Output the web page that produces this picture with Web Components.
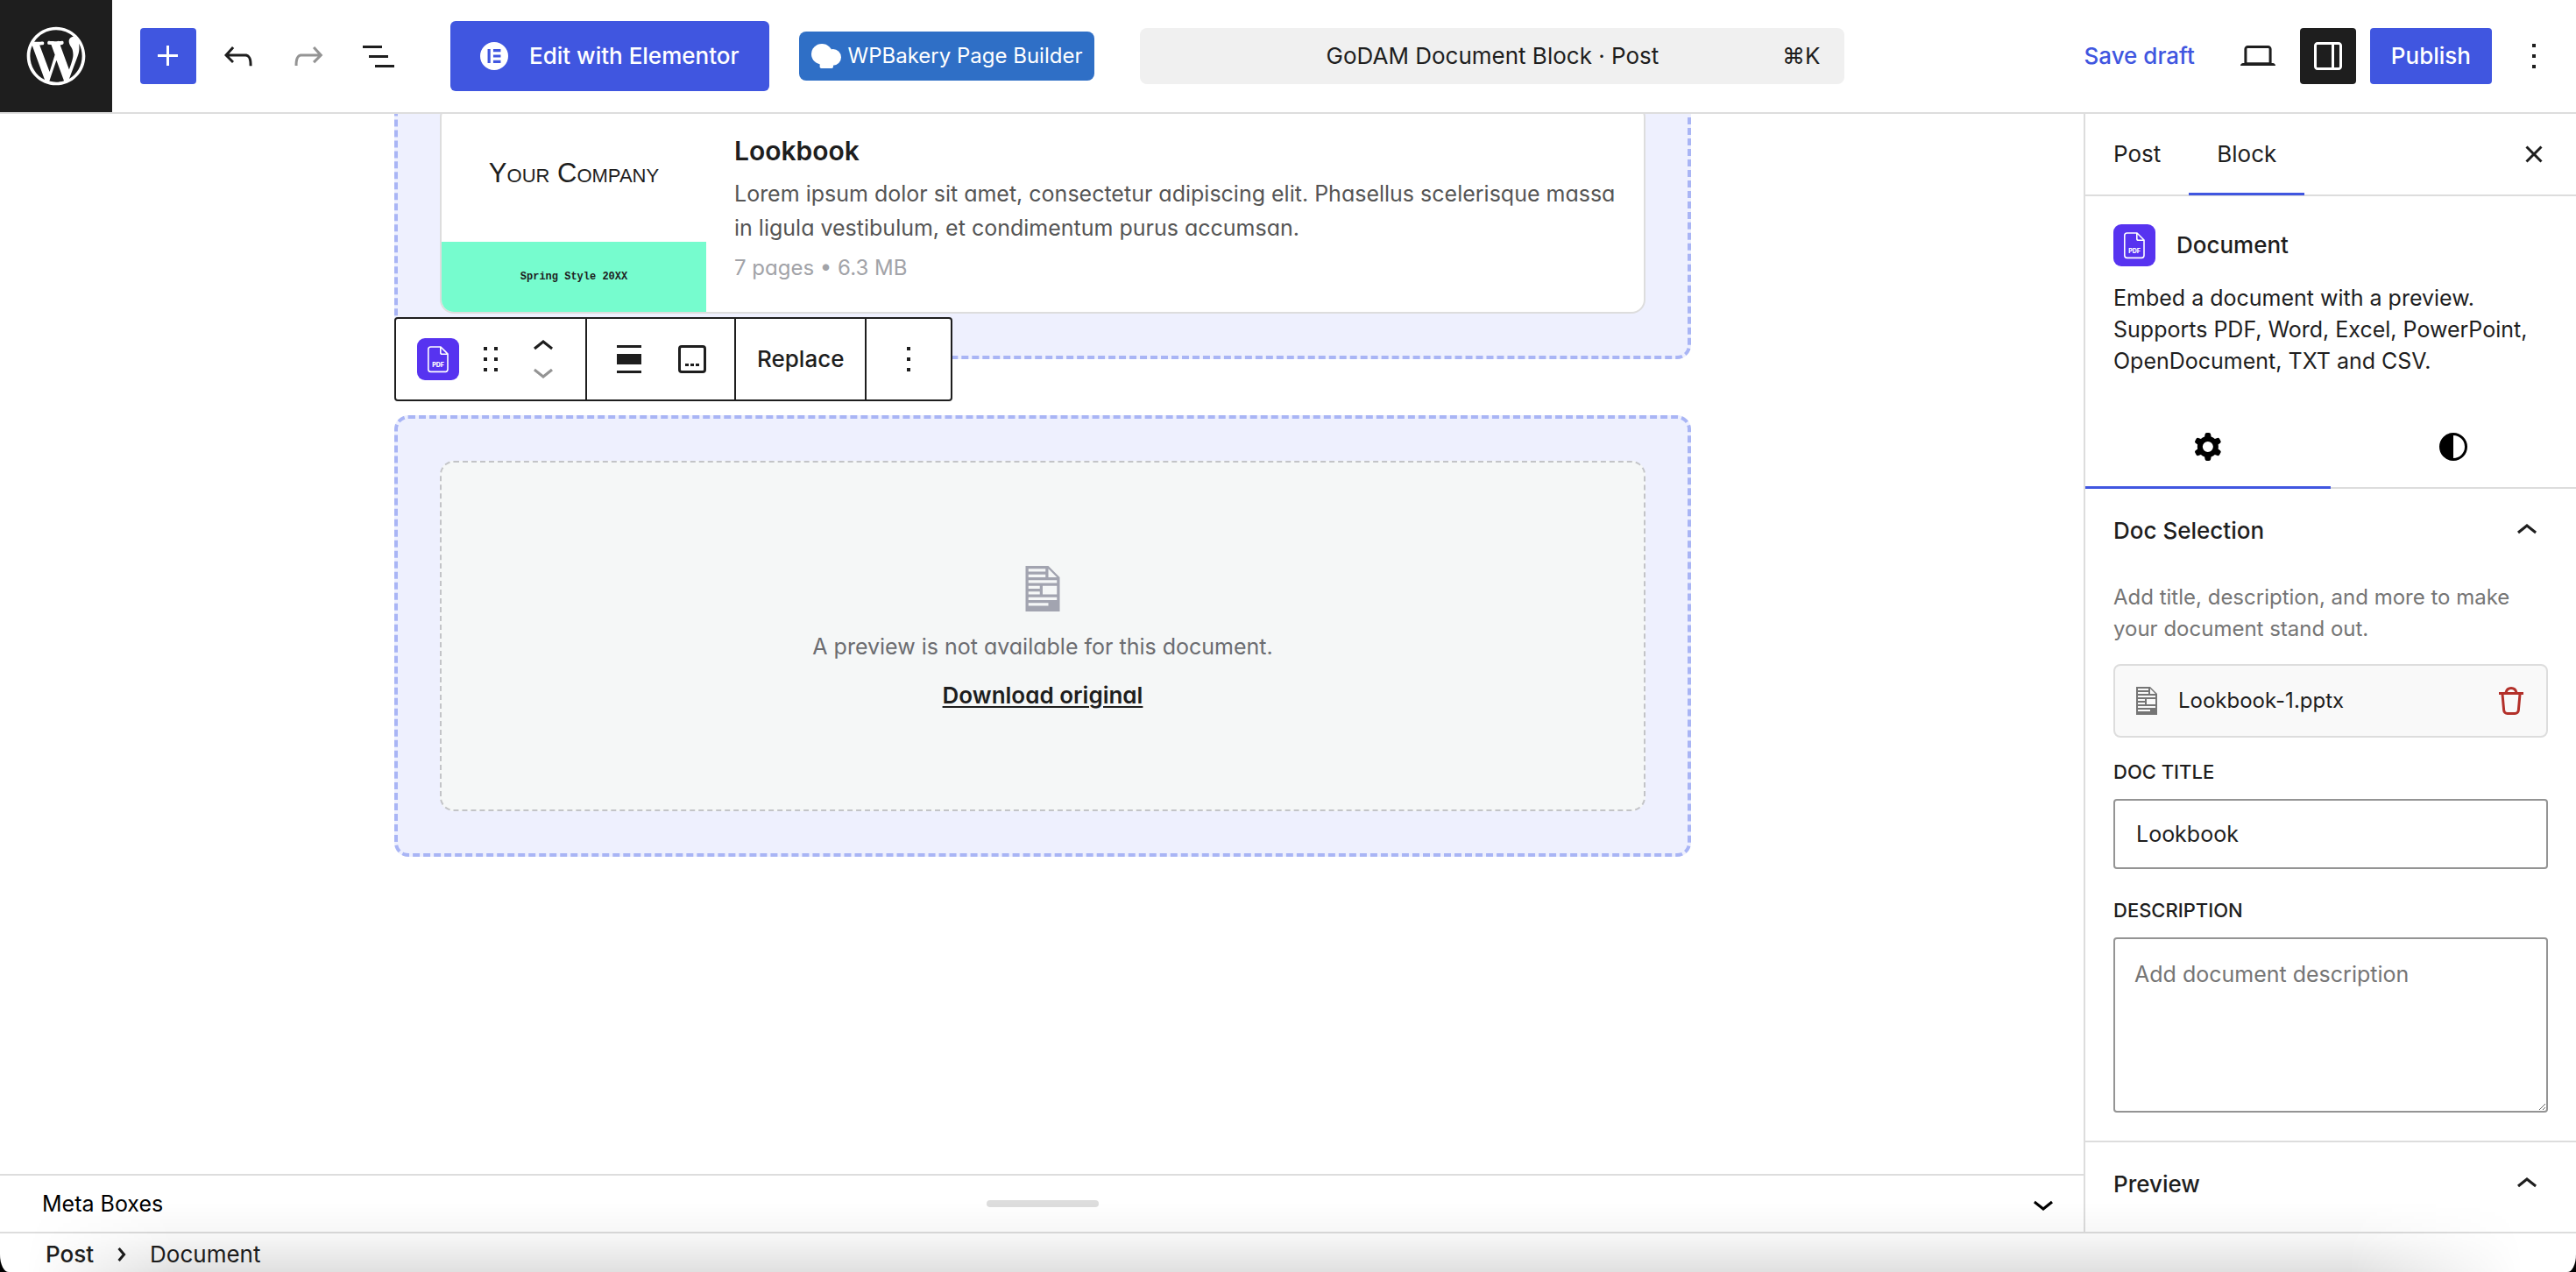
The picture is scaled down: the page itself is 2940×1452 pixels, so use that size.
<!DOCTYPE html>
<html lang="en">
<head>
<meta charset="utf-8">
<title>GoDAM Document Block</title>
<style>
  html {
    background: #000;
  }

  body {
    --accent: #4056e0;
    --ink: #1e1e1e;
    --line: #ddd;
    --muted: #757575;
    margin: 0;
    color: var(--ink);
    font: 400 25px/36px Inter, "Liberation Sans", sans-serif;
  }
</style>
</head>
<body>
<editor-app>
  <editor-header slot="header" heading="GoDAM Document Block · Post"></editor-header>

  <editor-canvas slot="canvas">
    <block-frame>
      <document-card heading="Lookbook" meta="7 pages • 6.3 MB">
        <slide-cover slot="cover" company="Your Company" caption="Spring Style 20XX"></slide-cover>
        Lorem ipsum dolor sit amet, consectetur adipiscing elit. Phasellus scelerisque massa in ligula vestibulum, et condimentum purus accumsan.
      </document-card>
    </block-frame>
    <block-frame>
      <block-toolbar slot="toolbar"></block-toolbar>
      <document-placeholder>A preview is not available for this document.</document-placeholder>
    </block-frame>
  </editor-canvas>

  <meta-boxes slot="meta">Meta Boxes</meta-boxes>

  <editor-sidebar slot="sidebar">
    <side-panel heading="Doc Selection">
      <file-row name="Lookbook-1.pptx">Add title, description, and more to make your document stand out.</file-row>
      <side-field label="Doc title" value="Lookbook"></side-field>
      <side-field label="Description" placeholder="Add document description" multiline></side-field>
    </side-panel>
    <side-panel heading="Preview"></side-panel>
  </editor-sidebar>

  <block-breadcrumb slot="footer"></block-breadcrumb>
</editor-app>

<script>
const ICONS = {
  plus: '<path d="M11 12.5V17.5H12.5V12.5H17.5V11H12.5V6H11V11H6V12.5H11Z"/>',
  undo: '<path d="M18.3 11.7c-.6-.6-1.4-.9-2.3-.9H6.7l2.9-3.3-1.1-1-4.5 5L8.5 16l1-1-2.7-2.7H16c.5 0 .9.2 1.3.5 1 1 1 3.4 1 4.5v.3h1.5v-.2c0-1.5 0-4.3-1.5-5.7z"/>',
  redo: '<path d="M15.6 6.5l-1.1 1 2.9 3.3H8c-.9 0-1.7.3-2.3.9-1.4 1.5-1.4 4.2-1.4 5.6v.2h1.5v-.3c0-1.1 0-3.5 1-4.5.3-.3.7-.5 1.3-.5h9.2L14.5 15l1.1 1.1 4.6-4.6-4.6-5z"/>',
  list: '<path d="M3 6h11v1.5H3V6Zm3.5 5.5h11V13h-11v-1.5ZM21 17H10v1.5h11V17Z"/>',
  desktop: '<path d="M20.5 16h-.7V8c0-1.1-.9-2-2-2H6.2c-1.1 0-2 .9-2 2v8h-.7c-.8 0-1.5.7-1.5 1.5h20c0-.8-.7-1.5-1.5-1.5zM5.7 8c0-.3.2-.5.5-.5h11.6c.3 0 .5.2.5.5v7.6H5.7V8z"/>',
  drawer: '<path d="M18 4H6c-1.1 0-2 .9-2 2v12c0 1.1.9 2 2 2h12c1.1 0 2-.9 2-2V6c0-1.1-.9-2-2-2zm-4 14.5H6c-.3 0-.5-.2-.5-.5V6c0-.3.2-.5.5-.5h8v13zm4.5-.5c0 .3-.2.5-.5.5h-2.5v-13H18c.3 0 .5.2.5.5v12z"/>',
  more: '<path d="M13 19h-2v-2h2v2zm0-6h-2v-2h2v2zm0-6h-2V5h2v2z"/>',
  close: '<path d="M12 13.06l3.712 3.713 1.061-1.06L13.061 12l3.712-3.712-1.06-1.06L12 10.938 8.288 7.227l-1.061 1.06L10.939 12l-3.712 3.712 1.06 1.061L12 13.061z"/>',
  up: '<path d="M6.5 12.4L12 8l5.5 4.4-.9 1.2L12 10l-4.5 3.6-1-1.2z"/>',
  down: '<path d="M17.5 11.6L12 16l-5.5-4.4.9-1.2L12 14l4.5-3.6 1 1.2z"/>',
  right: '<path d="M10.862 8.04l3.419 3.989-3.419 3.988-1.139-.976 2.582-3.012-2.582-3.012 1.139-.977z"/>',
  drag: '<path d="M8 7h2V5H8v2zm0 6h2v-2H8v2zm0 6h2v-2H8v2zm6-14v2h2V5h-2zm0 8h2v-2h-2v2zm0 6h2v-2h-2v2z"/>',
  align: '<path d="M19 5.5H5V4h14v1.5ZM19 20H5v-1.5h14V20ZM5 9h14v6H5V9Z"/>',
  caption: '<path fill-rule="evenodd" d="M6 5.5h12a.5.5 0 0 1 .5.5v12a.5.5 0 0 1-.5.5H6a.5.5 0 0 1-.5-.5V6a.5.5 0 0 1 .5-.5ZM4 6a2 2 0 0 1 2-2h12a2 2 0 0 1 2 2v12a2 2 0 0 1-2 2H6a2 2 0 0 1-2-2V6Zm4 10h2v-1.5H8V16Zm5 0h-2v-1.5h2V16Zm1 0h2v-1.5h-2V16Z"/>',
  cog: '<path fill-rule="evenodd" d="M10.289 4.836A1 1 0 0111.275 4h1.306a1 1 0 01.987.836l.244 1.466c.787.26 1.503.679 2.108 1.218l1.393-.522a1 1 0 011.216.437l.653 1.13a1 1 0 01-.23 1.273l-1.148.944a6.025 6.025 0 010 2.435l1.149.946a1 1 0 01.23 1.272l-.653 1.13a1 1 0 01-1.216.437l-1.394-.522c-.605.54-1.32.958-2.108 1.218l-.244 1.466a1 1 0 01-.987.836h-1.306a1 1 0 01-.986-.836l-.244-1.466a5.995 5.995 0 01-2.108-1.218l-1.394.522a1 1 0 01-1.217-.436l-.653-1.131a1 1 0 01.23-1.272l1.149-.946a6.026 6.026 0 010-2.435l-1.148-.944a1 1 0 01-.23-1.272l.653-1.131a1 1 0 011.217-.437l1.393.522a5.994 5.994 0 012.108-1.218l.244-1.466zM14.929 12a3 3 0 11-6 0 3 3 0 016 0z"/>',
  styles: '<path fill-rule="evenodd" d="M20 12a8 8 0 1 1-16 0 8 8 0 0 1 16 0Zm-1.5 0a6.5 6.5 0 0 1-6.5 6.5v-13a6.5 6.5 0 0 1 6.5 6.5Z"/>',
  trash: '<path fill-rule="evenodd" d="M12 5.5A2.25 2.25 0 0 0 9.878 7h4.244A2.251 2.251 0 0 0 12 5.5ZM12 4a3.751 3.751 0 0 0-3.675 3H5v1.5h1.27l.818 8.997a2.75 2.75 0 0 0 2.739 2.501h4.347a2.75 2.75 0 0 0 2.738-2.5L17.73 8.5H19V7h-3.325A3.751 3.751 0 0 0 12 4Zm4.224 4.5H7.776l.806 8.861a1.25 1.25 0 0 0 1.245 1.137h4.347a1.25 1.25 0 0 0 1.245-1.137l.805-8.861Z"/>',
  file: '<path transform="translate(2 2)" d="M12 2l4 4v12H4V2h8zM5 3v1h6V3H5zm7 3h3l-3-3v3zM5 5v1h6V5H5zm10 3V7H5v1h10zM5 9v1h4V9H5zm10 3V9h-5v3h5zM5 11v1h4v-1H5zm10 3v-1H5v1h10zM5 15v1h7v-1H5z"/>',
  wordpress: '<path transform="translate(2 2)" d="M20 10c0-5.51-4.49-10-10-10C4.48 0 0 4.49 0 10c0 5.52 4.48 10 10 10 5.51 0 10-4.48 10-10zM7.78 15.37L4.37 6.22c.55-.02 1.17-.08 1.17-.08.5-.06.44-1.13-.06-1.11 0 0-1.45.11-2.37.11-.18 0-.37 0-.58-.01C4.12 2.69 6.87 1.11 10 1.11c2.33 0 4.45.87 6.05 2.34-.68-.11-1.65.39-1.65 1.58 0 .74.45 1.36.9 2.1.35.61.55 1.36.55 2.46 0 1.49-1.4 5-1.4 5l-3.03-8.37c.54-.02.82-.17.82-.17.5-.05.44-1.25-.06-1.22 0 0-1.44.12-2.38.12-.87 0-2.33-.12-2.33-.12-.5-.03-.56 1.2-.06 1.22l.92.08 1.26 3.41zM17.41 10c.24-.64.74-1.87.43-4.25.7 1.29 1.05 2.71 1.05 4.25 0 3.29-1.73 6.24-4.4 7.78.97-2.59 1.94-5.2 2.92-7.78zM6.1 18.09C3.12 16.65 1.11 13.53 1.11 10c0-1.3.23-2.48.72-3.59C3.25 10.3 4.67 14.2 6.1 18.09zm4.03-6.63l2.58 6.98c-.86.29-1.76.45-2.71.45-.79 0-1.57-.11-2.29-.33.81-2.38 1.62-4.74 2.42-7.1z"/>',
  elementor: '<path fill-rule="evenodd" d="M12 0a12 12 0 1 1 0 24A12 12 0 0 1 12 0ZM6.4 6v12h2.4V6H6.4Zm4.8 0v2.4h6.4V6h-6.4Zm0 4.8v2.4h6.4v-2.4h-6.4Zm0 4.8V18h6.4v-2.4h-6.4Z"/>',
  bakery: '<ellipse cx="8.5" cy="10.4" rx="8.5" ry="8.3"/><circle cx="17.4" cy="13" r="6.6"/><rect x="6.8" y="14" width="10.8" height="7.9" rx="1.2"/>',
  pdf: '<rect width="24" height="24" rx="4.5" fill="#5733f0"/><path d="M7.8 5h5.7l4 4v8.8a1.4 1.4 0 0 1-1.4 1.4H7.8a1.4 1.4 0 0 1-1.4-1.4V6.4A1.4 1.4 0 0 1 7.8 5Zm5.6 0v3.2c0 .6.3.9.9.9h3.2" fill="none" stroke="#fff" stroke-width=".8" stroke-linejoin="round"/><text x="12" y="16.7" fill="#fff" font-size="3.5" font-weight="800" text-anchor="middle">PDF</text>'
};

// Shared button reset, included by the elements that hold controls.
const CONTROLS = `
  button {
    display: flex;
    align-items: center;
    justify-content: center;
    box-sizing: border-box;
    margin: 0;
    padding: 0;
    border: 0;
    border-radius: 4px;
    background: none;
    color: inherit;
    font: inherit;
    cursor: pointer;
  }
  .icon { width: 64px; height: 64px; flex: none; }
`;

class BaseElement extends HTMLElement {
  constructor() {
    super();
    this.attachShadow({ mode: 'open' });
  }

  connectedCallback() {
    this.shadowRoot.innerHTML = this.render();
  }

  attr(name) {
    return this.getAttribute(name) || '';
  }
}

class UiIcon extends BaseElement {
  render() {
    return `
      <style>
        :host { display: block; flex: none; width: 48px; height: 48px; }
        svg { display: block; width: 100%; height: 100%; fill: currentColor; }
      </style>
      <svg viewBox="0 0 24 24" aria-hidden="true">${ICONS[this.attr('name')]}</svg>
    `;
  }
}

class EditorApp extends BaseElement {
  render() {
    return `
      <style>
        :host {
          display: flex;
          flex-direction: column;
          height: 100vh;
          overflow: hidden;
          position: relative;
          background: #fff;
          border-radius: 0 0 10px 10px / 0 0 20px 20px;
        }
        #body { flex: 1; display: flex; min-height: 0; }
        #main { flex: 1; display: flex; flex-direction: column; min-width: 0; }
        /* soft shade along the window's bottom edge */
        #shade {
          position: absolute;
          left: 0;
          right: 0;
          bottom: 0;
          height: 80px;
          pointer-events: none;
          background: linear-gradient(rgba(0,0,0,0), rgba(0,0,0,0.035) 50%, rgba(0,0,0,0.12));
          -webkit-mask-image: linear-gradient(90deg, transparent 30px, #000 200px, #000 calc(100% - 260px), transparent calc(100% - 60px));
          mask-image: linear-gradient(90deg, transparent 30px, #000 200px, #000 calc(100% - 260px), transparent calc(100% - 60px));
        }
      </style>
      <slot name="header"></slot>
      <div id="body">
        <div id="main">
          <slot name="canvas"></slot>
          <slot name="meta"></slot>
        </div>
        <slot name="sidebar"></slot>
      </div>
      <slot name="footer"></slot>
      <div id="shade"></div>
    `;
  }
}

class EditorHeader extends BaseElement {
  render() {
    return `
      <style>
        ${CONTROLS}
        :host {
          display: flex;
          align-items: center;
          height: 128px;
          flex: none;
          border-bottom: 2px solid var(--line);
          padding-right: 16px;
          font-size: 26px;
        }
        #home {
          display: flex;
          align-items: center;
          justify-content: center;
          width: 128px;
          height: 128px;
          flex: none;
          background: var(--ink);
          color: #fff;
        }
        #home ui-icon { width: 80px; height: 80px; }
        #tools { display: flex; gap: 16px; margin-left: 32px; }
        .primary { background: var(--accent); color: #fff; }
        .dark { background: var(--ink); color: #fff; }
        [aria-disabled] { color: #949494; }
        #elementor {
          height: 80px;
          margin-left: 50px;
          padding: 0 34px;
          gap: 24px;
          border-radius: 6px;
          font-weight: 500;
        }
        #elementor ui-icon { width: 32px; height: 32px; }
        #bakery {
          height: 56px;
          margin-left: 34px;
          padding: 0 14px;
          gap: 8px;
          border-radius: 8px;
          background: #2f6fc6;
          color: #fff;
          font-size: 24px;
        }
        #bakery ui-icon { width: 34px; height: 34px; }
        #command {
          display: grid;
          grid-template-columns: 1fr auto 1fr;
          flex: 0 1 804px;
          height: 64px;
          margin-left: 52px;
          padding: 0 28px;
          border-radius: 8px;
          background: #f0f0f0;
        }
        #command kbd { grid-column: 3; justify-self: end; font: inherit; }
        #command span { grid-column: 2; }
        #actions { display: flex; gap: 16px; margin-left: auto; font-weight: 500; }
        #actions .text { height: 64px; padding: 0 24px; }
        #save { color: var(--accent); }
      </style>
      <a id="home" href="#" aria-label="View posts"><ui-icon name="wordpress"></ui-icon></a>
      <div id="tools">
        <button class="icon primary" aria-label="Block inserter"><ui-icon name="plus"></ui-icon></button>
        <button class="icon" aria-label="Undo"><ui-icon name="undo"></ui-icon></button>
        <button class="icon" aria-label="Redo" aria-disabled="true"><ui-icon name="redo"></ui-icon></button>
        <button class="icon" aria-label="Document overview"><ui-icon name="list"></ui-icon></button>
      </div>
      <button id="elementor" class="primary"><ui-icon name="elementor"></ui-icon>Edit with Elementor</button>
      <button id="bakery"><ui-icon name="bakery"></ui-icon>WPBakery Page Builder</button>
      <button id="command"><span>${this.attr('heading')}</span><kbd>⌘K</kbd></button>
      <div id="actions">
        <button id="save" class="text">Save draft</button>
        <button class="icon" aria-label="View"><ui-icon name="desktop"></ui-icon></button>
        <button class="icon dark" aria-label="Settings"><ui-icon name="drawer"></ui-icon></button>
        <button class="text primary">Publish</button>
        <button class="icon" aria-label="Options"><ui-icon name="more"></ui-icon></button>
      </div>
    `;
  }
}

class EditorCanvas extends BaseElement {
  render() {
    return `
      <style>
        :host { display: block; flex: 1; min-height: 0; overflow: hidden; }
        /* scrolled down past the top of the first block */
        #content {
          display: flex;
          flex-direction: column;
          gap: 64px;
          max-width: 1480px;
          margin: -64px auto 0;
          font-feature-settings: "cv11";
        }
      </style>
      <div id="content"><slot></slot></div>
    `;
  }
}

class BlockFrame extends BaseElement {
  render() {
    return `
      <style>
        :host { display: block; position: relative; }
        #frame {
          padding: 48px;
          border: 4px dashed #a9b5f5;
          border-radius: 16px;
          background: #eef0fe;
        }
        ::slotted([slot="toolbar"]) {
          position: absolute;
          left: 0;
          bottom: calc(100% + 16px);
        }
      </style>
      <slot name="toolbar"></slot>
      <div id="frame"><slot></slot></div>
    `;
  }
}

class SlideCover extends BaseElement {
  render() {
    return `
      <style>
        :host { display: flex; flex-direction: column; width: 302px; height: 236px; flex: none; text-align: center; }
        #company {
          flex: 1;
          display: flex;
          align-items: center;
          justify-content: center;
          font: 400 31px/40px "Liberation Sans Narrow", "Liberation Sans", sans-serif;
          font-variant: small-caps;
        }
        #caption {
          background: #76fcce;
          font: 700 12px/80px "Liberation Mono", monospace;
        }
      </style>
      <div id="company">${this.attr('company')}</div>
      <div id="caption">${this.attr('caption')}</div>
    `;
  }
}

class DocumentCard extends BaseElement {
  render() {
    return `
      <style>
        :host {
          display: flex;
          align-items: center;
          overflow: hidden;
          gap: 32px;
          padding-right: 12px;
          border: 2px solid var(--line);
          border-radius: 16px;
          background: #fff;
        }
        #text { flex: 1; min-width: 0; }
        h2 { margin: 0 0 10px; font-size: 30px; line-height: 40px; font-weight: 600; }
        p { margin: 0; line-height: 39px; color: #555; }
        #meta { margin-top: 6px; font-size: 24px; color: #a2a3a8; }
      </style>
      <slot name="cover"></slot>
      <div id="text">
        <h2>${this.attr('heading')}</h2>
        <p><slot></slot></p>
        <p id="meta">${this.attr('meta')}</p>
      </div>
    `;
  }
}

class DocumentPlaceholder extends BaseElement {
  render() {
    return `
      <style>
        :host {
          display: flex;
          flex-direction: column;
          align-items: center;
          justify-content: center;
          box-sizing: border-box;
          height: 400px;
          padding-bottom: 6px;
          border: 2px dashed #c3c4c7;
          border-radius: 16px;
          background: #f5f7f7;
          color: #6b6c70;
          line-height: 39px;
        }
        ui-icon { width: 78px; height: 78px; margin-bottom: 8px; color: #a2a4b0; }
        a {
          margin-top: 16px;
          color: var(--ink);
          font-size: 26px;
          font-weight: 600;
          text-underline-offset: 3px;
          text-decoration-thickness: 2px;
        }
      </style>
      <ui-icon name="file"></ui-icon>
      <div><slot></slot></div>
      <a href="#">Download original</a>
    `;
  }
}

class BlockToolbar extends BaseElement {
  render() {
    return `
      <style>
        ${CONTROLS}
        :host {
          display: flex;
          border: 2px solid var(--ink);
          border-radius: 4px;
          background: #fff;
          color: var(--ink);
          font-size: 26px;
          font-feature-settings: normal;
        }
        .group { display: flex; align-items: center; height: 92px; }
        .group + .group { border-left: 2px solid var(--ink); }
        #block { padding: 0 24px; gap: 12px; }
        #movers { display: flex; flex-direction: column; }
        #movers button { height: 28px; width: 48px; overflow: hidden; }
        [disabled] { color: #949494; }
        #format { padding: 0 24px; gap: 24px; }
        #replace { height: 92px; padding: 0 24px; font-weight: 500; }
        #more { width: 96px; }
        #more button { width: 100%; }
      </style>
      <div class="group" id="block">
        <button aria-label="Document"><ui-icon name="pdf"></ui-icon></button>
        <button aria-label="Drag"><ui-icon name="drag"></ui-icon></button>
        <div id="movers">
          <button aria-label="Move up"><ui-icon name="up"></ui-icon></button>
          <button aria-label="Move down" disabled><ui-icon name="down"></ui-icon></button>
        </div>
      </div>
      <div class="group" id="format">
        <button aria-label="Align"><ui-icon name="align"></ui-icon></button>
        <button aria-label="Caption"><ui-icon name="caption"></ui-icon></button>
      </div>
      <div class="group"><button id="replace">Replace</button></div>
      <div class="group" id="more"><button aria-label="Options"><ui-icon name="more"></ui-icon></button></div>
    `;
  }
}

class MetaBoxes extends BaseElement {
  render() {
    return `
      <style>
        ${CONTROLS}
        :host {
          display: grid;
          grid-template-columns: 1fr 128px 1fr;
          align-items: center;
          height: 64px;
          flex: none;
          padding: 0 24px;
          border-top: 2px solid var(--line);
          color: #000;
        }
        span { padding-left: 24px; }
        #handle { height: 8px; border-radius: 4px; background: #ddd; }
        button { justify-self: end; }
      </style>
      <span><slot></slot></span>
      <div id="handle"></div>
      <button aria-label="Toggle meta boxes"><ui-icon name="down"></ui-icon></button>
    `;
  }
}

class EditorSidebar extends BaseElement {
  render() {
    return `
      <style>
        ${CONTROLS}
        :host {
          display: block;
          position: relative;
          width: 560px;
          flex: none;
          background: #fff;
          box-shadow: -2px 0 0 var(--line);
        }
        header {
          display: flex;
          align-items: center;
          height: 92px;
          padding-right: 16px;
          border-bottom: 2px solid var(--line);
          font-size: 26px;
        }
        header .tab { height: 94px; padding: 0 32px; }
        header .icon { margin-left: auto; }
        .tab { border-radius: 0; }
        .tab[aria-selected="true"] { box-shadow: inset 0 -3px 0 var(--accent); }
        #card { padding: 32px; }
        #card h2 {
          display: flex;
          align-items: center;
          gap: 24px;
          margin: 0 0 18px;
          font-size: 26px;
          font-weight: 500;
        }
        #card p { margin: 0; }
        nav { display: flex; height: 94px; border-bottom: 2px solid var(--line); color: #000; }
        nav .tab { flex: 1; height: 96px; }
      </style>
      <header role="tablist">
        <button class="tab" role="tab">Post</button>
        <button class="tab" role="tab" aria-selected="true">Block</button>
        <button class="icon" aria-label="Close settings"><ui-icon name="close"></ui-icon></button>
      </header>
      <div id="card">
        <h2><ui-icon name="pdf"></ui-icon>Document</h2>
        <p>Embed a document with a preview. Supports PDF, Word, Excel, PowerPoint, OpenDocument, TXT and CSV.</p>
      </div>
      <nav role="tablist">
        <button class="tab" role="tab" aria-selected="true" aria-label="Settings"><ui-icon name="cog"></ui-icon></button>
        <button class="tab" role="tab" aria-label="Styles"><ui-icon name="styles"></ui-icon></button>
      </nav>
      <slot></slot>
    `;
  }
}

class SidePanel extends BaseElement {
  render() {
    return `
      <style>
        ${CONTROLS}
        :host { display: block; }
        :host(:not(:first-of-type)) { border-top: 2px solid var(--line); }
        h2 { margin: 0; font: inherit; font-size: 26px; font-weight: 500; }
        h2 button { width: 100%; height: 96px; padding: 0 32px; justify-content: space-between; }
        #content { display: flex; flex-direction: column; padding: 10px 32px 32px; gap: 32px; }
        :host(:not(:first-of-type)) #content { display: none; }
      </style>
      <h2><button aria-expanded="true">${this.attr('heading')}<ui-icon name="up"></ui-icon></button></h2>
      <div id="content"><slot></slot></div>
    `;
  }
}

class FileRow extends BaseElement {
  render() {
    return `
      <style>
        ${CONTROLS}
        :host { display: block; margin-bottom: -8px; }
        p { margin: 0 0 22px; font-size: 24px; color: var(--muted); }
        #row {
          display: flex;
          align-items: center;
          gap: 12px;
          height: 80px;
          padding: 0 16px 0 12px;
          border: 2px solid var(--line);
          border-radius: 8px;
          background: #f9f9f9;
          font-size: 24px;
        }
        #row > ui-icon { color: var(--muted); }
        #row button { margin-left: auto; color: #b3302a; }
      </style>
      <p><slot></slot></p>
      <div id="row">
        <ui-icon name="file"></ui-icon>
        <span>${this.attr('name')}</span>
        <button aria-label="Remove file"><ui-icon name="trash"></ui-icon></button>
      </div>
    `;
  }
}

class SideField extends BaseElement {
  render() {
    const control = this.hasAttribute('multiline')
      ? `<textarea id="control" placeholder="${this.attr('placeholder')}"></textarea>`
      : `<input id="control" type="text" value="${this.attr('value')}">`;
    return `
      <style>
        :host { display: block; }
        label {
          display: block;
          margin-bottom: 16px;
          font-size: 22px;
          line-height: 30px;
          font-weight: 500;
          text-transform: uppercase;
        }
        input, textarea {
          display: block;
          box-sizing: border-box;
          width: 100%;
          height: 80px;
          margin: 0;
          padding: 0 24px;
          border: 2px solid #949494;
          border-radius: 4px;
          background: #fff;
          color: inherit;
          font: inherit;
        }
        textarea { height: 200px; padding: 22px; }
        ::placeholder { color: var(--muted); }
      </style>
      <label for="control">${this.attr('label')}</label>
      ${control}
    `;
  }
}

class BlockBreadcrumb extends BaseElement {
  render() {
    return `
      <style>
        ${CONTROLS}
        :host {
          display: flex;
          align-items: center;
          box-sizing: border-box;
          height: 46px;
          flex: none;
          padding: 4px 52px 0;
          border-top: 2px solid var(--line);
          font-size: 26px;
        }
        button { font-weight: 500; }
        ui-icon { margin: 0 8px; }
      </style>
      <button>Post</button>
      <ui-icon name="right"></ui-icon>
      <span>Document</span>
    `;
  }
}

customElements.define('ui-icon', UiIcon);
customElements.define('editor-app', EditorApp);
customElements.define('editor-header', EditorHeader);
customElements.define('editor-canvas', EditorCanvas);
customElements.define('block-frame', BlockFrame);
customElements.define('slide-cover', SlideCover);
customElements.define('document-card', DocumentCard);
customElements.define('document-placeholder', DocumentPlaceholder);
customElements.define('block-toolbar', BlockToolbar);
customElements.define('meta-boxes', MetaBoxes);
customElements.define('editor-sidebar', EditorSidebar);
customElements.define('side-panel', SidePanel);
customElements.define('file-row', FileRow);
customElements.define('side-field', SideField);
customElements.define('block-breadcrumb', BlockBreadcrumb);
</script>
</body>
</html>
